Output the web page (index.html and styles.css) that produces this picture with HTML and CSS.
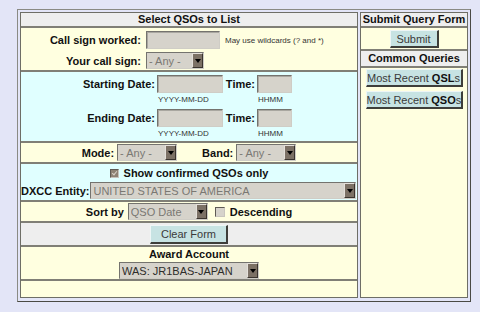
FILE: index.html
```html
<!DOCTYPE html>
<html lang="en">
<head>
<meta charset="UTF-8" />
<meta name="viewport" content="width=device-width, initial-scale=1" />
<title>Select QSOs to List</title>
<link rel="stylesheet" href="styles.css">
</head>
<body>
<form class="frame" onsubmit="return false">

  <div class="panel main">
    <div class="row head">Select QSOs to List</div>

    <div class="row cream calls">
      <label class="lbl">Call sign worked:</label>
      <div class="field"><input type="text" class="txt call" /><span class="hint wild">May use wildcards (? and *)</span></div>
      <label class="lbl">Your call sign:</label>
      <div class="field">
        <span class="sel w58"><select><option>- Any -</option></select><span class="arrow"></span></span>
      </div>
    </div>

    <div class="row cyan dates">
      <label class="lbl">Starting Date:</label>
      <input type="text" class="txt" />
      <label class="lbl">Time:</label>
      <input type="text" class="txt" />
      <span></span><span class="hint">YYYY-MM-DD</span><span></span><span class="hint">HHMM</span>
      <label class="lbl">Ending Date:</label>
      <input type="text" class="txt" />
      <label class="lbl">Time:</label>
      <input type="text" class="txt" />
      <span></span><span class="hint">YYYY-MM-DD</span><span></span><span class="hint">HHMM</span>
    </div>

    <div class="row cream line mode">
      <b>Mode:</b>
      <span class="sel w60"><select><option>- Any -</option></select><span class="arrow"></span></span>
      <b class="band">Band:</b>
      <span class="sel w60"><select><option>- Any -</option></select><span class="arrow"></span></span>
    </div>

    <div class="row cyan dxcc">
      <div class="line confirmed">
        <span class="check on"></span><b>Show confirmed QSOs only</b>
      </div>
      <div class="entity">
        <b>DXCC Entity:</b>
        <span class="sel w266"><select><option>UNITED STATES OF AMERICA</option></select><span class="arrow"></span></span>
      </div>
    </div>

    <div class="row cream line sort">
      <b>Sort by</b>
      <span class="sel w80"><select><option>QSO Date</option></select><span class="arrow"></span></span>
      <span class="check"></span><b>Descending</b>
    </div>

    <div class="row grey line clear">
      <button type="reset" class="btn w78">Clear Form</button>
    </div>

    <div class="row cream award">
      <b>Award Account</b>
      <span class="sel w140 dark"><select><option>WAS: JR1BAS-JAPAN</option></select><span class="arrow"></span></span>
    </div>

    <div class="row cream last"></div>
  </div>

  <div class="panel side">
    <div class="row head">Submit Query Form</div>
    <div class="row cream submit">
      <button type="submit" class="btn w49">Submit</button>
    </div>
    <div class="row head cq">Common Queries</div>
    <div class="row cream quick">
      <button type="button" class="btn w97">Most Recent <b>QSL</b>s</button>
      <button type="button" class="btn w97">Most Recent <b>QSO</b>s</button>
    </div>
  </div>

</form>
</body>
</html>
```

FILE: styles.css
```css
body {
  margin: 0;
  background-color: #e3e5f7;
  font-family: "Liberation Sans", Arial, sans-serif;
  font-size: 11px;
  color: #111;
}
b {
  font-weight: bold;
}
.frame {
  display: flex;
  gap: 2px;
  width: 454px;
  box-sizing: border-box;
  margin: 9px 0 0 17px;
  padding: 2px 2px 3px;
  border: 1px solid;
  border-color: #8a8a84 #4a4a44 #4a4a44 #8a8a84;
}
.panel {
  display: flex;
  flex-direction: column;
  border: 1px solid #6e6e66;
  background-color: #ffffe0;
}
.main {
  width: 338px;
  box-sizing: border-box;
}
.side {
  width: 108px;
  box-sizing: border-box;
}
/* heights below include the 2px separator */
.row {
  flex-shrink: 0;
  border-bottom: 2px solid #807f76;
  box-sizing: border-box;
}
.row.last,
.row.quick {
  border-bottom: none;
}
.cream {
  background-color: #ffffe0;
}
.cyan {
  background-color: #e0ffff;
}
.grey,
.head {
  background-color: #eeeeee;
}
.head {
  height: 15px;
  line-height: 13px;
  text-align: center;
  font-weight: bold;
  white-space: nowrap;
}
.lbl {
  font-weight: bold;
  text-align: right;
  white-space: nowrap;
}
.hint {
  font-size: 8px;
  color: #333;
  white-space: nowrap;
}

/* inputs */
.txt {
  box-sizing: border-box;
  height: 18px;
  margin: 0;
  padding: 0 2px;
  background-color: #d6d3cb;
  border: 1px solid;
  border-color: #74736e #cfcdc6 #cfcdc6 #74736e;
  box-shadow: inset 1px 1px 0 #a9a7a0;
  font: 11px "Liberation Sans", Arial, sans-serif;
}
.sel {
  display: inline-flex;
  box-sizing: border-box;
  height: 17px;
  background-color: #d6d3cb;
  border: 1px solid;
  border-color: #74736e #cfcdc6 #cfcdc6 #74736e;
}
.sel select {
  flex: 1;
  min-width: 0;
  height: 100%;
  margin: 0;
  padding: 0 2px;
  border: none;
  background: transparent;
  -webkit-appearance: none;
  appearance: none;
  font: 11px "Liberation Sans", Arial, sans-serif;
  color: #7a7873;
  outline: none;
}
.sel.dark select {
  color: #2e2d2a;
}
.arrow {
  width: 11px;
  box-sizing: border-box;
  display: flex;
  align-items: center;
  justify-content: center;
  background-color: #7c7165;
  border: 1px solid;
  border-color: #e4e0da #3a342e #3a342e #e4e0da;
}
.arrow::after {
  content: "";
  border-top: 4px solid #000;
  border-left: 3px solid transparent;
  border-right: 3px solid transparent;
}
.w58 { width: 58px; }
.w60 { width: 60px; }
.w80 { width: 80px; }
.w140 { width: 140px; }
.w266 { width: 266px; }

.check {
  display: inline-block;
  width: 10px;
  height: 10px;
  box-sizing: border-box;
  background-color: #d6d3cb;
  border: 1px solid;
  border-color: #5e5a54 #c8c5be #c8c5be #5e5a54;
  position: relative;
}
.check.on {
  width: 9px;
  height: 9px;
  background-color: #8d8274;
}
.check.on::after {
  content: "";
  position: absolute;
  left: 2px;
  top: 0px;
  width: 2px;
  height: 4px;
  border: solid #d8d2c8;
  border-width: 0 1px 1px 0;
  transform: rotate(40deg);
}

.btn {
  box-sizing: border-box;
  height: 18px;
  padding: 0;
  background-color: #c7e3e3;
  border: solid;
  border-width: 1px 2px 2px 1px;
  border-color: #eef6f6 #3e3e3a #3e3e3a #eef6f6;
  font: 11px "Liberation Sans", Arial, sans-serif;
  color: #3a3a3a;
  white-space: nowrap;
  cursor: pointer;
}
.btn b {
  color: #111;
}
.w49 { width: 49px; }
.w78 { width: 78px; height: 19px; }
.w97 { width: 97px; }

/* left panel rows */
.calls {
  height: 44px;
  padding-top: 3px;
  display: grid;
  grid-template-columns: 120px auto;
  grid-template-rows: 18px 17px;
  column-gap: 5px;
  row-gap: 3px;
  align-items: center;
}
.field {
  display: flex;
  align-items: center;
}
.call {
  width: 74px;
}
.wild {
  margin-left: 5px;
}
.dates {
  height: 71px;
  padding-top: 3px;
  display: grid;
  grid-template-columns: 134px 66px 30px 35px;
  grid-template-rows: 18px 16px 18px 14px;
  column-gap: 2px;
  align-items: center;
}
.dates .hint {
  align-self: start;
  line-height: 12px;
  padding: 1px 0 0 1px;
}
.line {
  display: flex;
  align-items: center;
  justify-content: center;
}
.mode {
  height: 21px;
}
.mode .sel {
  margin-left: 3px;
}
.mode .band {
  margin-left: 25px;
}
.dxcc {
  height: 38px;
  display: flex;
  flex-direction: column;
}
.confirmed {
  height: 18px;
  gap: 5px;
}
.entity {
  display: flex;
  align-items: center;
  gap: 1px;
}
.sort {
  height: 21px;
}
.sort .sel {
  margin: 0 7px 0 4px;
}
.sort .check {
  margin-right: 5px;
}
.clear {
  height: 24px;
  align-items: flex-start;
  padding-top: 2px;
}
.award {
  height: 34px;
  display: flex;
  flex-direction: column;
  align-items: center;
}
.award b {
  line-height: 14px;
  height: 15px;
}
.last {
  height: 16px;
}

/* right panel rows */
.submit {
  height: 23px;
  display: flex;
  justify-content: center;
  padding-top: 2px;
}
.cq {
  height: 17px;
  line-height: 15px;
}
.quick {
  flex: 1;
  display: flex;
  flex-direction: column;
  align-items: center;
  gap: 4px;
  padding-top: 1px;
}
```
